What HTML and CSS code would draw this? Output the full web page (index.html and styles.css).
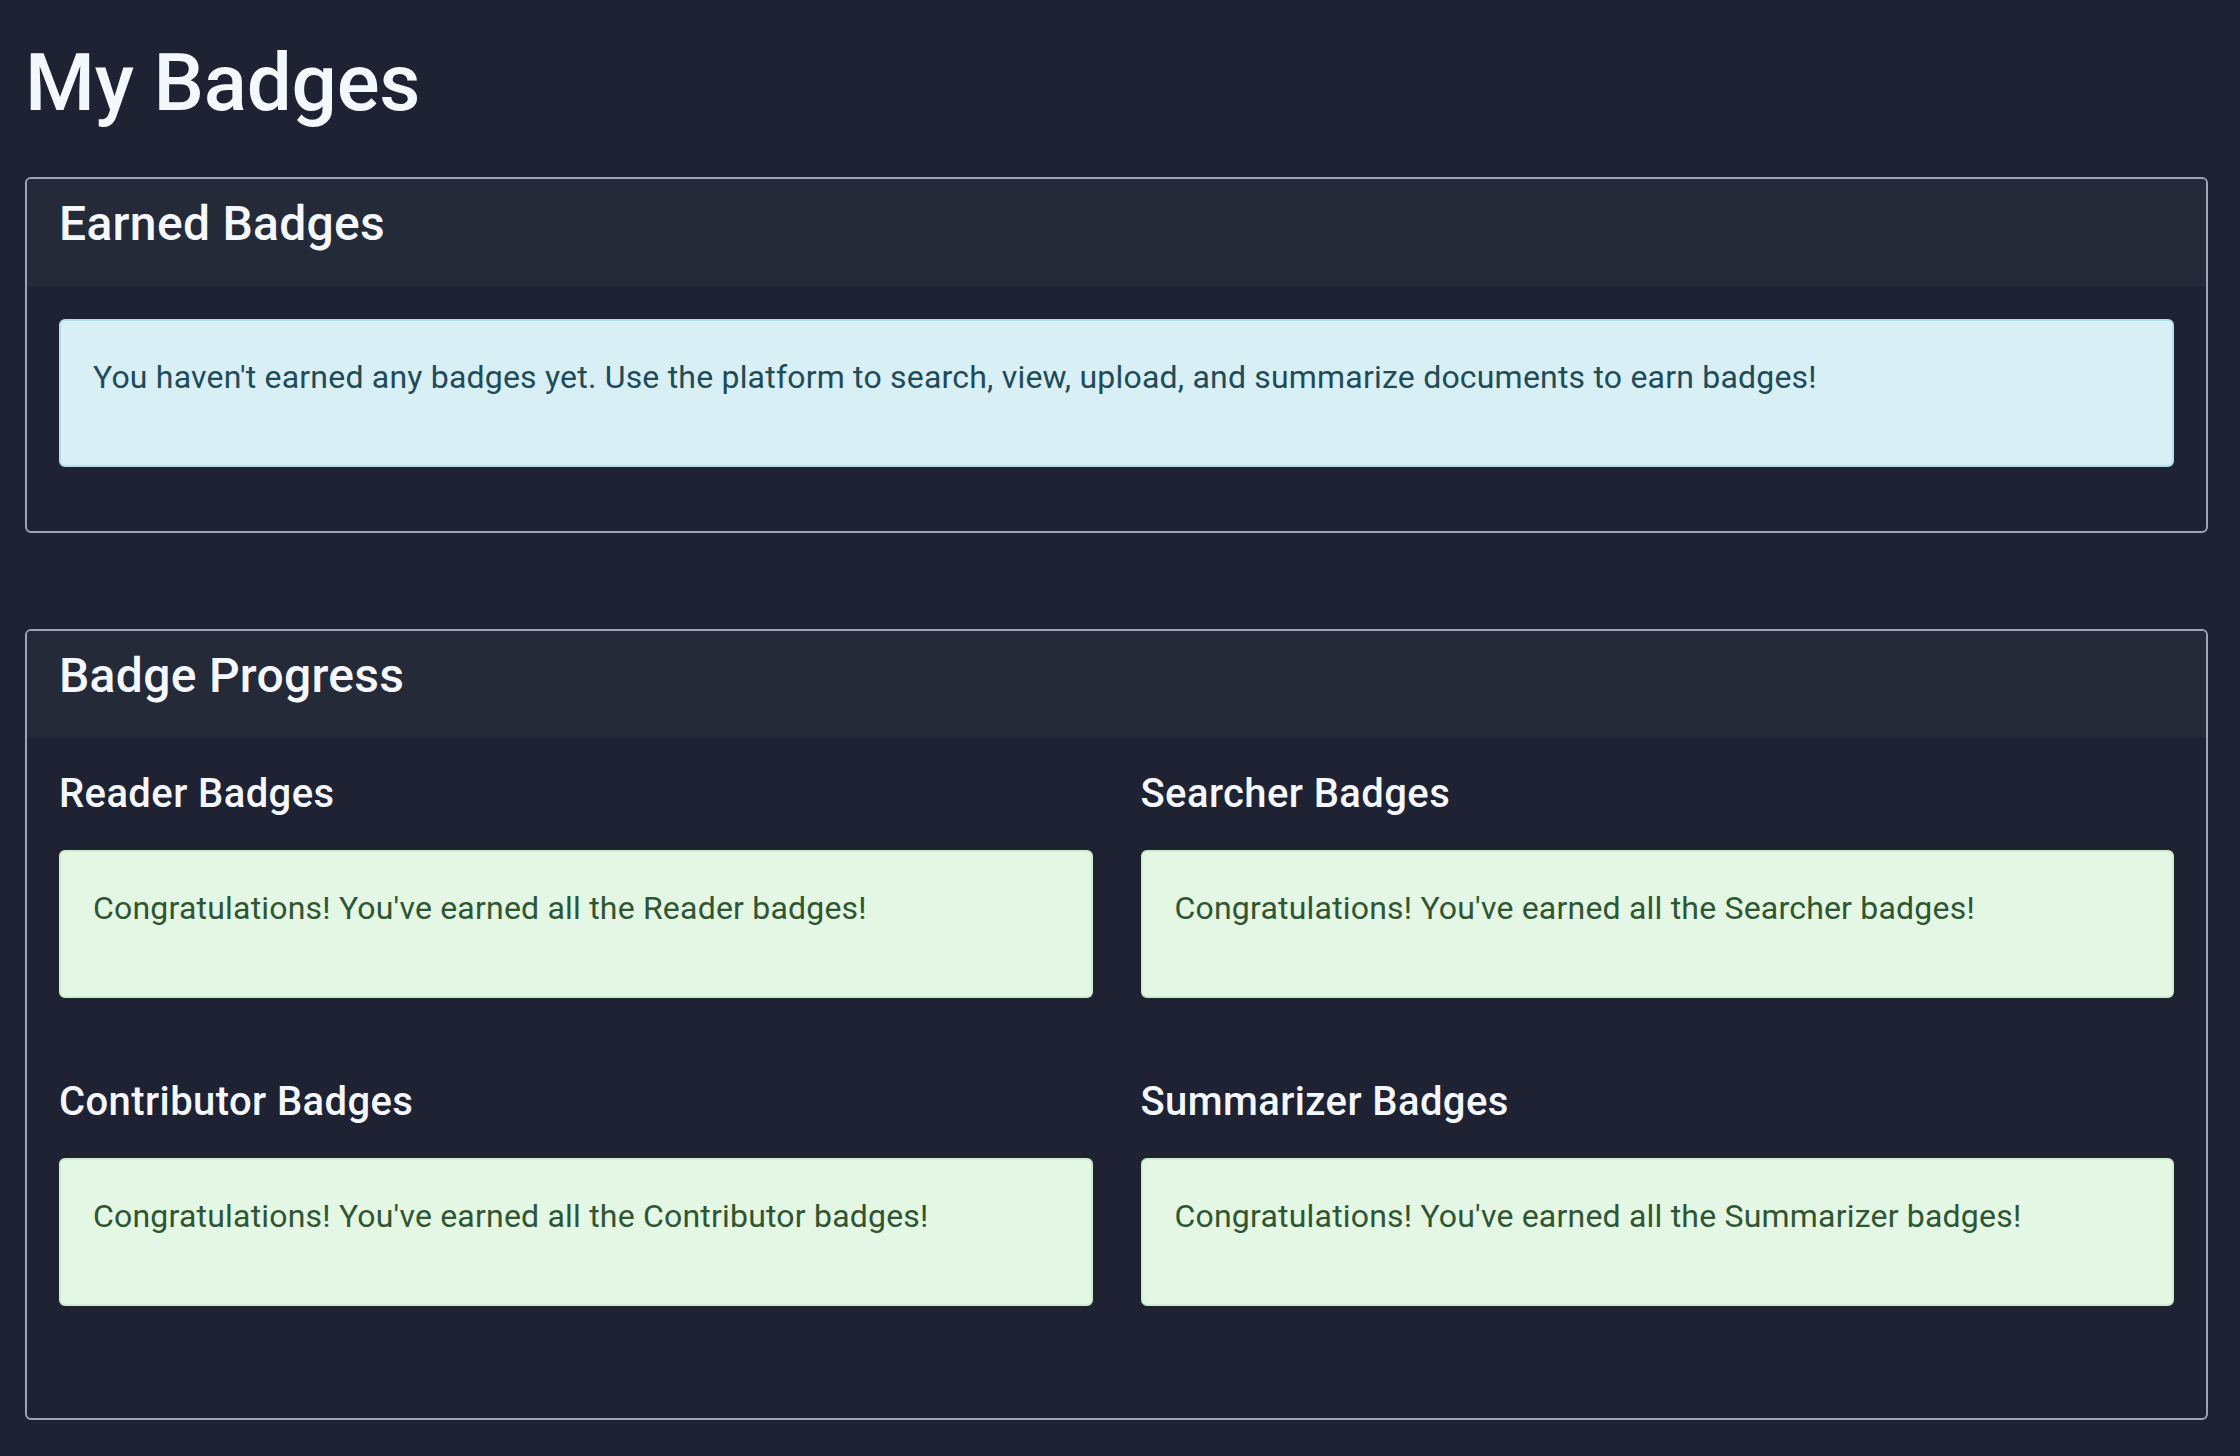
FILE: index.html
```html
<!DOCTYPE html>
<html lang="en">
<head>
<meta charset="utf-8">
<title>My Badges</title>
<link rel="stylesheet" href="styles.css">
</head>
<body>
<main class="page">
  <h1 class="page-title">My Badges</h1>

  <section class="card card-earned">
    <header class="card-header"><h2 class="card-title">Earned Badges</h2></header>
    <div class="card-body">
      <div class="alert alert-info"><p>You haven't earned any badges yet. Use the platform to search, view, upload, and summarize documents to earn badges!</p></div>
    </div>
  </section>

  <section class="card">
    <header class="card-header"><h2 class="card-title">Badge Progress</h2></header>
    <div class="card-body">
      <div class="grid">
        <div class="col">
          <h3 class="group-title">Reader Badges</h3>
          <div class="alert alert-success"><p>Congratulations! You've earned all the Reader badges!</p></div>
        </div>
        <div class="col">
          <h3 class="group-title">Searcher Badges</h3>
          <div class="alert alert-success"><p>Congratulations! You've earned all the Searcher badges!</p></div>
        </div>
        <div class="col">
          <h3 class="group-title">Contributor Badges</h3>
          <div class="alert alert-success"><p>Congratulations! You've earned all the Contributor badges!</p></div>
        </div>
        <div class="col">
          <h3 class="group-title">Summarizer Badges</h3>
          <div class="alert alert-success"><p>Congratulations! You've earned all the Summarizer badges!</p></div>
        </div>
      </div>
    </div>
  </section>
</main>
</body>
</html>
```

FILE: styles.css
```css
* { box-sizing: border-box; }

html, body {
  margin: 0;
  padding: 0;
  background: #1e2233;
}

body {
  font-family: Roboto, "Liberation Sans", Arial, sans-serif;
  font-size: 32px;
  line-height: 1.5;
  color: #f4f7fb;
}

.page {
  padding: 35px 32px 0 25px;
}

.page-title {
  margin: 0 0 46px 0;
  font-size: 80px;
  font-weight: 500;
  line-height: 1.2;
  letter-spacing: -0.2px;
  color: #f4f7fb;
}

.card {
  border: 2px solid #9ea3b5;
  border-radius: 6px;
  overflow: hidden;
  margin-bottom: 96px;
}

.card:last-child {
  margin-bottom: 0;
}

.card-header {
  background: #252a39;
  padding: 16px 32px 16px 32px;
  border-bottom: 2px solid #232838;
}

.card-title {
  margin: 0 0 16px 0;
  font-size: 48px;
  font-weight: 500;
  line-height: 1.2;
  letter-spacing: 0.3px;
  color: #f4f7fb;
}

.card-body {
  padding: 32px;
}

.grid {
  display: grid;
  grid-template-columns: 1fr 1fr;
  column-gap: 48px;
}

.col {
  margin-bottom: 48px;
}

.group-title {
  margin: 0 0 32px 0;
  font-size: 40px;
  font-weight: 500;
  line-height: 1.2;
  letter-spacing: 0.4px;
  color: #f4f7fb;
}

.alert {
  border: 2px solid transparent;
  border-radius: 6px;
  padding: 32px;
  margin-bottom: 32px;
}

.alert p {
  margin: 0 0 32px 0;
  font-size: 32px;
  line-height: 48px;
  letter-spacing: 0.2px;
}

.alert-info {
  background: #d7eff5;
  border-color: #b4dfea;
  color: #204b57;
}

.alert-success {
  background: #e4f6e4;
  border-color: #cbeecb;
  color: #2f5532;
}
```
